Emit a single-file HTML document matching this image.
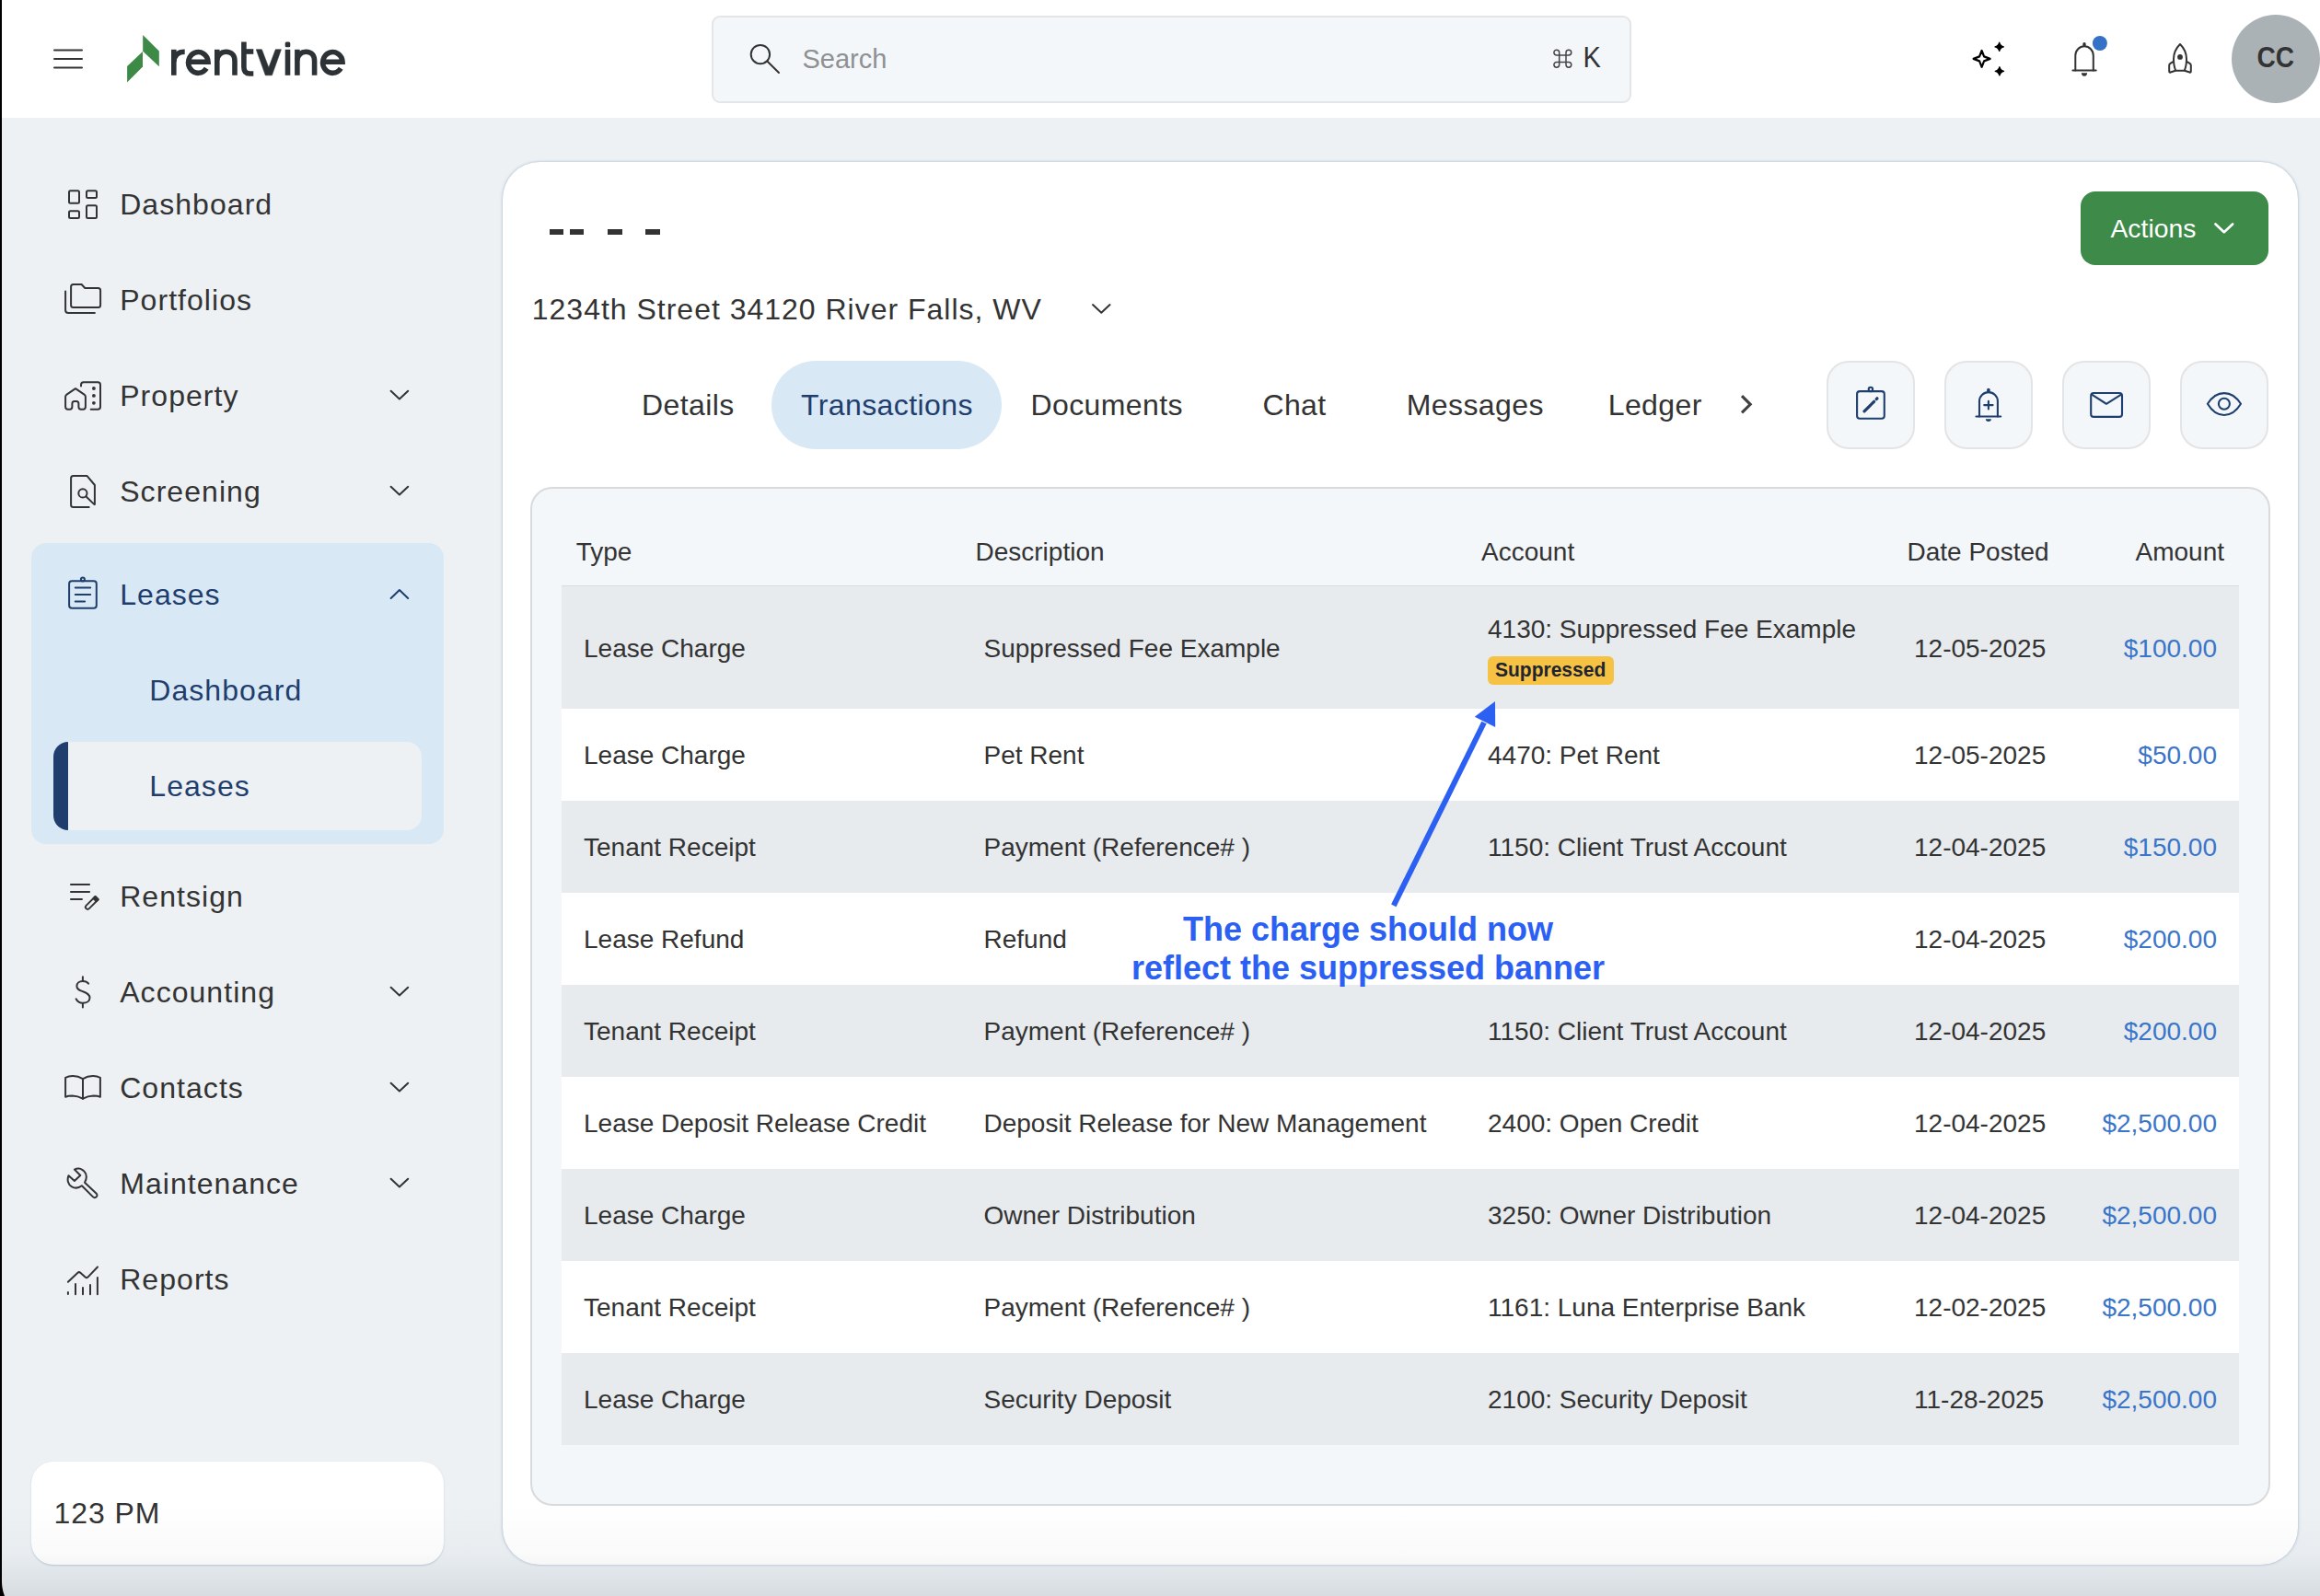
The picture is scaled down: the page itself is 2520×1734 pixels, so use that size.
<!DOCTYPE html>
<html><head><meta charset="utf-8">
<style>
*{box-sizing:border-box;margin:0;padding:0}
html,body{width:2520px;height:1734px;overflow:hidden}
body{position:relative;background:#edf1f4;font-family:"Liberation Sans",sans-serif;color:#333}
.t{position:absolute;line-height:1;white-space:nowrap}
.ab{position:absolute}
svg{position:absolute;overflow:visible}
</style></head><body>
<div class="ab" style="left:0;top:0;width:2520px;height:128px;background:#fff"></div>
<svg style="left:0;top:0" width="1" height="1"><g stroke="#333" stroke-width="2" stroke-linecap="round"><line x1="59" y1="54.5" x2="89" y2="54.5"/><line x1="59" y1="64" x2="89" y2="64"/><line x1="59" y1="73.5" x2="89" y2="73.5"/></g></svg>
<svg style="left:0;top:0" width="1" height="1"><g fill="#3d8a47"><polygon points="155.2,37.9 172.8,55.4 172.8,72.3 155.2,55.7"/><polygon points="155,55.9 155,72.5 138.1,89.6 138.1,72.1"/></g></svg>
<svg style="left:180px;top:40px" width="1" height="1"><g fill="none" stroke="#2d3236" stroke-width="5.6">
<path d="M8.8 41.8 V13.8"/>
<path d="M8.8 27 C9.5 19.5 13.5 16.2 20.7 16.2"/>
<path d="M24.6 27.2 H46 A10.7 11.4 0 1 0 44.2 34.3"/>
<path d="M55.8 41.8 V13.8"/>
<path d="M55.8 25 C57 19 60.5 16.2 65.4 16.2 C71.5 16.2 75 20 75 26 V41.8"/>
<path d="M84.9 5.6 V33 C84.9 37.8 87.2 40 91.5 40 H95.3"/>
<path d="M84.9 16 H95.3"/>

<path d="M132.5 41.8 V13.8"/>
<path d="M142.9 41.8 V13.8"/>
<path d="M142.9 25 C144 19 147.5 16.2 152.3 16.2 C158.3 16.2 161.6 20 161.6 26 V41.8"/>
<path d="M170.6 27.2 H192 A10.7 11.4 0 1 0 190.2 34.3"/>
</g><rect x="129.7" y="5.6" width="5.6" height="5.6" rx="1.5" fill="#2d3236"/><polygon points="98.3,13.8 104.4,13.8 111.85,33.5 119.3,13.8 125.4,13.8 115.4,41.8 108.3,41.8" fill="#2d3236" stroke="#2d3236" stroke-width="0.6" stroke-linejoin="round"/></svg>
<div class="ab" style="left:773px;top:16.5px;width:999px;height:95.5px;background:#f4f7fa;border:2px solid #e4e5e6;border-radius:9px"></div>
<svg style="left:0;top:0" width="1" height="1"><g fill="none" stroke="#333" stroke-width="2" stroke-linecap="round"><circle cx="825.9" cy="59.1" r="10.2"/><line x1="833.6" y1="66.8" x2="846" y2="79"/></g></svg>
<div class="t" style="left:871.5px;top:50.0px;font-size:29px;color:#8e9092;font-weight:400;letter-spacing:0px;">Search</div>
<svg style="left:0;top:0" width="1" height="1"><g fill="none" stroke="#444" stroke-width="1.5">
<path d="M1693.7 60 V57.1 A2.9 2.9 0 1 0 1690.8 60 H1703.9 A2.9 2.9 0 1 0 1701 57.1 V70.3 A2.9 2.9 0 1 0 1703.9 67.4 H1690.8 A2.9 2.9 0 1 0 1693.7 70.3 Z"/>
</g></svg>
<div class="t" style="left:1719.5px;top:48.7px;font-size:29px;color:#333;font-weight:400;letter-spacing:0px;transform:scaleY(1.06);transform-origin:0 85%">K</div>
<svg style="left:0;top:0" width="1" height="1">
<path d="M2152.6 55 L2155.1 61.4 L2161.6 63.9 L2155.1 66.4 L2152.6 72.8 L2150.1 66.4 L2143.6 63.9 L2150.1 61.4 Z" fill="none" stroke="#000" stroke-width="2.2" stroke-linejoin="round"/>
<path d="M2171.70 46.10 Q2172.60 49.90 2176.40 50.80 Q2172.60 51.70 2171.70 55.50 Q2170.80 51.70 2167.00 50.80 Q2170.80 49.90 2171.70 46.10 Z" fill="#000" stroke="#000" stroke-width="1.2" stroke-linejoin="round"/>
<path d="M2171.90 72.60 Q2172.80 76.40 2176.60 77.30 Q2172.80 78.20 2171.90 82.00 Q2171.00 78.20 2167.20 77.30 Q2171.00 76.40 2171.90 72.60 Z" fill="#000" stroke="#000" stroke-width="1.2" stroke-linejoin="round"/>
</svg>
<svg style="left:0;top:0" width="1" height="1"><g fill="none" stroke="#333" stroke-width="2" stroke-linecap="round">
<path d="M2254.3 76.4 V60.5 A9.75 10.2 0 0 1 2273.8 60.5 V76.4"/>
<line x1="2251.4" y1="76.4" x2="2276.7" y2="76.4"/>
</g>
<rect x="2262.3" y="46" width="3.4" height="4.5" rx="1.7" fill="#333"/>
<path d="M2260.9 79.3 H2267.1 A3.1 3.4 0 0 1 2260.9 79.3 Z" fill="#333"/>
<circle cx="2280.9" cy="47" r="8" fill="#3571c7"/>
</svg>
<svg style="left:0;top:0" width="1" height="1"><g fill="none" stroke="#333" stroke-width="2" stroke-linejoin="round">
<path d="M2368 48 C2363 53 2361 58 2361 64 C2361 70 2362 74 2363.3 76.7 H2372.7 C2374 74 2375 70 2375 64 C2375 58 2373 53 2368 48 Z"/>
<path d="M2360.7 66.8 L2357.5 68.8 Q2356.2 69.6 2356.2 71 V77.5 Q2356.2 79 2357.6 78.5 L2363 76.7"/>
<path d="M2375.3 66.8 L2378.5 68.8 Q2379.8 69.6 2379.8 71 V77.5 Q2379.8 79 2378.4 78.5 L2373 76.7"/>
</g><circle cx="2368" cy="61.9" r="2.9" fill="#333"/></svg>
<div class="ab" style="left:2424px;top:16px;width:96px;height:96px;border-radius:50%;background:#abb2b5"></div>
<div class="t" style="left:2451.5px;top:49.7px;font-size:28px;color:#333;font-weight:700;letter-spacing:0px;transform:scaleY(1.13);transform-origin:0 85%">CC</div>
<div class="t" style="left:130.2px;top:205.9px;font-size:32px;color:#333;font-weight:400;letter-spacing:1.05px;">Dashboard</div>
<div class="t" style="left:130.2px;top:309.9px;font-size:32px;color:#333;font-weight:400;letter-spacing:1.05px;">Portfolios</div>
<div class="t" style="left:130.2px;top:413.9px;font-size:32px;color:#333;font-weight:400;letter-spacing:1.05px;">Property</div>
<div class="t" style="left:130.2px;top:517.9px;font-size:32px;color:#333;font-weight:400;letter-spacing:1.05px;">Screening</div>
<div class="ab" style="left:34px;top:590px;width:448px;height:327px;background:#d9e8f5;border-radius:16px"></div>
<div class="t" style="left:130.2px;top:629.9px;font-size:32px;color:#1f3e6d;font-weight:400;letter-spacing:1.05px;">Leases</div>
<div class="t" style="left:162.3px;top:733.9px;font-size:32px;color:#1f3e6d;font-weight:400;letter-spacing:1.05px;">Dashboard</div>
<div class="ab" style="left:58px;top:806px;width:400px;height:96px;background:#edf1f4;border-radius:16px;overflow:hidden"><div class="ab" style="left:0;top:0;width:16px;height:96px;background:#1f3e6d"></div></div>
<div class="t" style="left:162.3px;top:837.9px;font-size:32px;color:#1f3e6d;font-weight:400;letter-spacing:1.05px;">Leases</div>
<div class="t" style="left:130.2px;top:957.9px;font-size:32px;color:#333;font-weight:400;letter-spacing:1.05px;">Rentsign</div>
<div class="t" style="left:130.2px;top:1061.9px;font-size:32px;color:#333;font-weight:400;letter-spacing:1.05px;">Accounting</div>
<div class="t" style="left:130.2px;top:1165.9px;font-size:32px;color:#333;font-weight:400;letter-spacing:1.05px;">Contacts</div>
<div class="t" style="left:130.2px;top:1269.9px;font-size:32px;color:#333;font-weight:400;letter-spacing:1.05px;">Maintenance</div>
<div class="t" style="left:130.2px;top:1373.9px;font-size:32px;color:#333;font-weight:400;letter-spacing:1.05px;">Reports</div>
<svg style="left:0;top:0" width="1" height="1"><path d="M424.59999999999997 424.8 L433.9 433.5 L443.2 424.8" fill="none" stroke="#333" stroke-width="2" stroke-linecap="round" stroke-linejoin="round"/></svg>
<svg style="left:0;top:0" width="1" height="1"><path d="M424.59999999999997 528.8 L433.9 537.5 L443.2 528.8" fill="none" stroke="#333" stroke-width="2" stroke-linecap="round" stroke-linejoin="round"/></svg>
<svg style="left:0;top:0" width="1" height="1"><path d="M424.59999999999997 1072.8 L433.9 1081.5 L443.2 1072.8" fill="none" stroke="#333" stroke-width="2" stroke-linecap="round" stroke-linejoin="round"/></svg>
<svg style="left:0;top:0" width="1" height="1"><path d="M424.59999999999997 1176.8 L433.9 1185.5 L443.2 1176.8" fill="none" stroke="#333" stroke-width="2" stroke-linecap="round" stroke-linejoin="round"/></svg>
<svg style="left:0;top:0" width="1" height="1"><path d="M424.59999999999997 1280.8 L433.9 1289.5 L443.2 1280.8" fill="none" stroke="#333" stroke-width="2" stroke-linecap="round" stroke-linejoin="round"/></svg>
<svg style="left:0;top:0" width="1" height="1"><path d="M424.6 650 L433.9 641 L443.2 650" fill="none" stroke="#1f3e6d" stroke-width="2" stroke-linecap="round" stroke-linejoin="round"/></svg>
<svg style="left:0;top:0" width="1" height="1"><g fill="none" stroke="#333" stroke-width="2" stroke-linecap="round" stroke-linejoin="round">
<rect x="75" y="207.2" width="11" height="13.6" rx="1.5"/><rect x="94" y="207.2" width="11" height="7.8" rx="1.5"/>
<rect x="75" y="229.2" width="11" height="7.8" rx="1.5"/><rect x="94" y="223.2" width="11" height="13.8" rx="1.5"/>
</g></svg>
<svg style="left:0;top:0" width="1" height="1"><g fill="none" stroke="#333" stroke-width="2" stroke-linecap="round" stroke-linejoin="round">
<path d="M77.1 311.5 Q77.1 309 79.6 309 H88.6 L92.3 313 H106.6 Q109.1 313 109.1 315.5 V331.4 Q109.1 333.9 106.6 333.9 H79.6 Q77.1 333.9 77.1 331.4 Z"/>
<path d="M71.1 316.4 V337.1 Q71.1 340.1 74.1 340.1 H102.9"/>
</g></svg>
<svg style="left:0;top:0" width="1" height="1"><g fill="none" stroke="#333" stroke-width="2" stroke-linecap="round" stroke-linejoin="round">
<path d="M71.1 431 Q71.1 429.5 72.5 428.6 L82 422.2 L91.5 428.6 Q92.9 429.5 92.9 431 V442 Q92.9 444.7 90.2 444.7 H88 Q85.4 444.7 85.4 442 V438.5 Q85.4 436 83 436 H80.8 Q78.4 436 78.4 438.5 V442 Q78.4 444.7 75.8 444.7 H73.8 Q71.1 444.7 71.1 442 Z"/>
<path d="M88 419.5 V418 Q88 415.2 90.8 415.2 H106.2 Q109 415.2 109 418 V441.9 Q109 444.7 106.2 444.7 H98.7"/>
</g><g fill="#333"><circle cx="101.9" cy="422" r="1.9"/><circle cx="101.9" cy="429.9" r="1.9"/><circle cx="101.9" cy="437.8" r="1.9"/></g></svg>
<svg style="left:0;top:0" width="1" height="1"><g fill="none" stroke="#333" stroke-width="2" stroke-linecap="round" stroke-linejoin="round">
<path d="M96.7 550.9 H79.6 Q77.1 550.9 77.1 548.4 V519.6 Q77.1 517.1 79.6 517.1 H94.6 L102.9 527 V547.7"/>
<circle cx="89.9" cy="535.9" r="4.6"/><path d="M93.3 539.3 L102.5 548.1"/>
</g></svg>
<svg style="left:0;top:0" width="1" height="1"><g fill="none" stroke="#1f3e6d" stroke-width="2" stroke-linecap="round" stroke-linejoin="round">
<rect x="75.1" y="631.3" width="29.7" height="29.5" rx="3"/>
<circle cx="89.9" cy="629.4" r="2"/>
<path d="M81.8 638.4 H98.2 M81.8 645.9 H98.2 M81.8 653.4 H92.1"/>
</g></svg>
<svg style="left:0;top:0" width="1" height="1"><g fill="none" stroke="#333" stroke-width="2">
<path d="M76.2 961 H97.8 M76.2 968.9 H97.8 M76.2 977 H89.7"/>
<path d="M106.73 977.23 L96.83 987.13 A2.3 2.3 0 0 1 93.57 983.87 L103.47 973.97 Z" stroke-linejoin="round" stroke-width="1.9"/>
<path d="M106.73 977.23 L104.61 979.35 L101.35 976.09 L103.47 973.97 Z" fill="#333" stroke-width="1.9" stroke-linejoin="round"/>
</g></svg>
<svg style="left:0;top:0" width="1" height="1"><g fill="none" stroke="#333" stroke-width="2" stroke-linecap="round" stroke-linejoin="round">
<path d="M89.9 1061.3 V1065.5 M89.9 1090 V1094.5"/>
<path d="M96.1 1068.6 C94.5 1066.5 92.3 1066.1 89.9 1066.1 C86 1066.1 83.4 1068.3 83.4 1071.4 C83.4 1075 86.5 1076 90 1077.2 C94 1078.6 97.5 1080 97.5 1083.9 C97.5 1087.6 94.3 1089.8 89.9 1089.8 C86.5 1089.8 84 1088 82.6 1085.3"/>
</g></svg>
<svg style="left:0;top:0" width="1" height="1"><g fill="none" stroke="#333" stroke-width="2" stroke-linecap="round" stroke-linejoin="round">
<path d="M90 1172.1 C86.5 1170 83 1169 78.8 1169.1 C75.6 1169.2 73 1169.9 71.1 1170.8 V1191.8 C73 1190.9 75.5 1190.6 78.5 1190.6 C82.5 1190.7 86.5 1191.8 90 1193.7 Z"/>
<path d="M90 1172.1 C93.5 1170 97 1169 101.2 1169.1 C104.4 1169.2 107 1169.9 108.9 1170.8 V1191.8 C107 1190.9 104.5 1190.6 101.5 1190.6 C97.5 1190.7 93.5 1191.8 90 1193.7 Z"/>
</g></svg>
<svg style="left:0;top:0" width="1" height="1"><g fill="none" stroke="#333" stroke-width="2" stroke-linecap="round" stroke-linejoin="round">
<path d="M80.9 1270.6 L87.3 1277 L80.9 1283 L74.5 1277.2 C72.5 1282 74 1287 78 1289.3 C81.5 1291.3 85.5 1290.8 88.9 1288.3 L101 1300.4 C102 1301.4 103.7 1301.4 104.7 1300.4 C105.7 1299.4 105.7 1297.7 104.7 1296.7 L92 1284.7 C94.5 1281 94.5 1276 91.5 1272.7 C88.5 1269.5 84.5 1268.8 80.9 1270.6 Z"/>
</g></svg>
<svg style="left:0;top:0" width="1" height="1"><g fill="none" stroke="#333" stroke-width="2" stroke-linecap="round" stroke-linejoin="round">
<path d="M73.9 1392.7 L84.5 1382.8 Q85.9 1381.5 87.3 1382.8 L92.6 1387.6 Q94 1388.8 95.4 1387.6 L106 1376.5"/>
<path d="M73.9 1404 V1406 M82 1395 V1406.2 M90 1399.1 V1406.2 M98 1395.9 V1406.2 M105.9 1388 V1406.2"/>
</g></svg>
<div class="ab" style="left:34px;top:1588px;width:448px;height:112px;background:#fff;border-radius:24px;box-shadow:0 1px 2px rgba(70,100,140,.28)"></div>
<div class="t" style="left:58.5px;top:1627.9px;font-size:32px;color:#333;font-weight:400;letter-spacing:0.95px;">123 PM</div>
<div class="ab" style="left:546px;top:176px;width:1950px;height:1524px;background:#fff;border-radius:40px;box-shadow:-1px 0 3px rgba(100,130,170,.26),1px 0 3px rgba(100,130,170,.26),0 0 1px rgba(100,130,170,.22)"></div>
<div class="ab" style="left:597px;top:249.2px;width:15px;height:5.6px;background:#333"></div><div class="ab" style="left:619.4px;top:249.2px;width:15px;height:5.6px;background:#333"></div><div class="ab" style="left:660.3px;top:249.2px;width:15.3px;height:5.6px;background:#333"></div><div class="ab" style="left:701.3px;top:249.2px;width:15.3px;height:5.6px;background:#333"></div>
<div class="ab" style="left:2260px;top:208px;width:204px;height:80px;background:#3e8a48;border-radius:16px"></div>
<div class="t" style="left:2292.5px;top:234.3px;font-size:28.3px;color:#fff;font-weight:400;letter-spacing:0px;">Actions</div>
<svg style="left:0;top:0" width="1" height="1"><path d="M2406.5 243.5 L2415.8 252.2 L2425.1000000000004 243.5" fill="none" stroke="#fff" stroke-width="2.7" stroke-linecap="round" stroke-linejoin="round"/></svg>
<div class="t" style="left:577.8px;top:319.9px;font-size:32px;color:#333;font-weight:400;letter-spacing:0.99px;">1234th Street 34120 River Falls, WV</div>
<svg style="left:0;top:0" width="1" height="1"><path d="M1187.0 331.1 L1196.3 339.8 L1205.6 331.1" fill="none" stroke="#333" stroke-width="2" stroke-linecap="round" stroke-linejoin="round"/></svg>
<div class="ab" style="left:838px;top:392px;width:250px;height:96px;background:#d9e8f5;border-radius:48px"></div>
<div class="t" style="left:697.0px;top:424.3px;font-size:32px;color:#333;font-weight:400;letter-spacing:0.4px;">Details</div>
<div class="t" style="left:870.0px;top:424.3px;font-size:32px;color:#1f3e6d;font-weight:400;letter-spacing:0.4px;">Transactions</div>
<div class="t" style="left:1119.5px;top:424.3px;font-size:32px;color:#333;font-weight:400;letter-spacing:0.4px;">Documents</div>
<div class="t" style="left:1371.4px;top:424.3px;font-size:32px;color:#333;font-weight:400;letter-spacing:0.4px;">Chat</div>
<div class="t" style="left:1527.8px;top:424.3px;font-size:32px;color:#333;font-weight:400;letter-spacing:0.4px;">Messages</div>
<div class="t" style="left:1746.7px;top:424.3px;font-size:32px;color:#333;font-weight:400;letter-spacing:0.4px;">Ledger</div>
<svg style="left:0;top:0" width="1" height="1"><path d="M1892 430.2 L1901.2 439.3 L1892 448.4" fill="none" stroke="#404040" stroke-width="3.1" stroke-linecap="butt" stroke-linejoin="miter"/></svg>
<div class="ab" style="left:1984px;top:392px;width:96px;height:96px;background:#f3f7fa;border:2px solid #e2e4e6;border-radius:24px"></div>
<div class="ab" style="left:2112px;top:392px;width:96px;height:96px;background:#f3f7fa;border:2px solid #e2e4e6;border-radius:24px"></div>
<div class="ab" style="left:2240px;top:392px;width:96px;height:96px;background:#f3f7fa;border:2px solid #e2e4e6;border-radius:24px"></div>
<div class="ab" style="left:2368px;top:392px;width:96px;height:96px;background:#f3f7fa;border:2px solid #e2e4e6;border-radius:24px"></div>
<svg style="left:0;top:0" width="1" height="1"><g fill="none" stroke="#1f3e6d" stroke-width="2.1" stroke-linecap="round" stroke-linejoin="round">
<rect x="2017.1" y="425.1" width="29.7" height="29.7" rx="3"/>
<circle cx="2031.9" cy="423" r="2.2"/>
<path d="M2025 446.8 L2035.6 436.3" stroke-width="3.2"/>
<path d="M2038.2 433.6 L2039 432.8" stroke-width="3.2"/>
</g></svg>
<svg style="left:0;top:0" width="1" height="1"><g fill="none" stroke="#1f3e6d" stroke-width="2.1" stroke-linecap="round" stroke-linejoin="round">
<path d="M2150 452.5 V435.8 A9.95 9.7 0 0 1 2169.9 435.8 V452.5"/>
<line x1="2146.5" y1="452.5" x2="2173.2" y2="452.5"/>
<path d="M2155.2 440.1 H2164.6 M2159.9 435.7 V444.5"/>
</g>
<rect x="2158.1" y="421.8" width="3.6" height="4.6" rx="1.8" fill="#1f3e6d"/>
<path d="M2156.9 455.2 H2162.9 A3 2.7 0 0 1 2156.9 455.2 Z" fill="#1f3e6d"/>
</svg>
<svg style="left:0;top:0" width="1" height="1"><g fill="none" stroke="#1f3e6d" stroke-width="2.1" stroke-linecap="round" stroke-linejoin="round">
<rect x="2271.2" y="427" width="33.8" height="25.9" rx="3"/>
<path d="M2272.5 428.8 L2287.9 438.8 L2303.7 428.8"/>
</g></svg>
<svg style="left:0;top:0" width="1" height="1"><g fill="none" stroke="#1f3e6d" stroke-width="2.1" stroke-linecap="round" stroke-linejoin="round">
<path d="M2397.9 438.8 C2403 430.5 2409 427.1 2415.9 427.1 C2422.8 427.1 2428.8 430.5 2434 438.8 C2428.8 447.3 2422.8 451 2415.9 451 C2409 451 2403 447.3 2397.9 438.8 Z"/>
<circle cx="2415.9" cy="438.8" r="6"/>
</g></svg>
<div class="ab" style="left:576px;top:529px;width:1890px;height:1107px;background:#f3f7fa;border:2px solid #d9dadb;border-radius:24px"></div>
<div class="t" style="left:625.7px;top:585.8px;font-size:28px;color:#333;font-weight:400;letter-spacing:0px;">Type</div>
<div class="t" style="left:1059.5px;top:585.8px;font-size:28px;color:#333;font-weight:400;letter-spacing:0px;">Description</div>
<div class="t" style="left:1609.0px;top:585.8px;font-size:28px;color:#333;font-weight:400;letter-spacing:0px;">Account</div>
<div class="t" style="left:2071.5px;top:585.8px;font-size:28px;color:#333;font-weight:400;letter-spacing:0px;">Date Posted</div>
<div class="t" style="right:104.0px;top:585.8px;font-size:28px;color:#333;font-weight:400;letter-spacing:0px;">Amount</div>
<div class="ab" style="left:610px;top:635.5px;width:1822px;height:2px;background:#d9dcdf"></div>
<div class="ab" style="left:610px;top:637px;width:1822px;height:133px;background:#e7ebee"></div>
<div class="t" style="left:634.0px;top:690.8px;font-size:28px;color:#333;font-weight:400;letter-spacing:0px;">Lease Charge</div>
<div class="t" style="left:1068.5px;top:690.8px;font-size:28px;color:#333;font-weight:400;letter-spacing:0px;">Suppressed Fee Example</div>
<div class="t" style="left:1616.0px;top:670.3px;font-size:28px;color:#333;font-weight:400;letter-spacing:0px;">4130: Suppressed Fee Example</div>
<div class="t" style="left:2079.0px;top:690.8px;font-size:28px;color:#333;font-weight:400;letter-spacing:0px;">12-05-2025</div>
<div class="t" style="right:112.0px;top:690.8px;font-size:28px;color:#3a75c9;font-weight:400;letter-spacing:0px;">$100.00</div>
<div class="ab" style="left:610px;top:770px;width:1822px;height:100px;background:#fff"></div>
<div class="t" style="left:634.0px;top:807.3px;font-size:28px;color:#333;font-weight:400;letter-spacing:0px;">Lease Charge</div>
<div class="t" style="left:1068.5px;top:807.3px;font-size:28px;color:#333;font-weight:400;letter-spacing:0px;">Pet Rent</div>
<div class="t" style="left:1616.0px;top:807.3px;font-size:28px;color:#333;font-weight:400;letter-spacing:0px;">4470: Pet Rent</div>
<div class="t" style="left:2079.0px;top:807.3px;font-size:28px;color:#333;font-weight:400;letter-spacing:0px;">12-05-2025</div>
<div class="t" style="right:112.0px;top:807.3px;font-size:28px;color:#3a75c9;font-weight:400;letter-spacing:0px;">$50.00</div>
<div class="ab" style="left:610px;top:870px;width:1822px;height:100px;background:#e7ebee"></div>
<div class="t" style="left:634.0px;top:907.3px;font-size:28px;color:#333;font-weight:400;letter-spacing:0px;">Tenant Receipt</div>
<div class="t" style="left:1068.5px;top:907.3px;font-size:28px;color:#333;font-weight:400;letter-spacing:0px;">Payment (Reference# )</div>
<div class="t" style="left:1616.0px;top:907.3px;font-size:28px;color:#333;font-weight:400;letter-spacing:0px;">1150: Client Trust Account</div>
<div class="t" style="left:2079.0px;top:907.3px;font-size:28px;color:#333;font-weight:400;letter-spacing:0px;">12-04-2025</div>
<div class="t" style="right:112.0px;top:907.3px;font-size:28px;color:#3a75c9;font-weight:400;letter-spacing:0px;">$150.00</div>
<div class="ab" style="left:610px;top:970px;width:1822px;height:100px;background:#fff"></div>
<div class="t" style="left:634.0px;top:1007.3px;font-size:28px;color:#333;font-weight:400;letter-spacing:0px;">Lease Refund</div>
<div class="t" style="left:1068.5px;top:1007.3px;font-size:28px;color:#333;font-weight:400;letter-spacing:0px;">Refund</div>
<div class="t" style="left:2079.0px;top:1007.3px;font-size:28px;color:#333;font-weight:400;letter-spacing:0px;">12-04-2025</div>
<div class="t" style="right:112.0px;top:1007.3px;font-size:28px;color:#3a75c9;font-weight:400;letter-spacing:0px;">$200.00</div>
<div class="ab" style="left:610px;top:1070px;width:1822px;height:100px;background:#e7ebee"></div>
<div class="t" style="left:634.0px;top:1107.3px;font-size:28px;color:#333;font-weight:400;letter-spacing:0px;">Tenant Receipt</div>
<div class="t" style="left:1068.5px;top:1107.3px;font-size:28px;color:#333;font-weight:400;letter-spacing:0px;">Payment (Reference# )</div>
<div class="t" style="left:1616.0px;top:1107.3px;font-size:28px;color:#333;font-weight:400;letter-spacing:0px;">1150: Client Trust Account</div>
<div class="t" style="left:2079.0px;top:1107.3px;font-size:28px;color:#333;font-weight:400;letter-spacing:0px;">12-04-2025</div>
<div class="t" style="right:112.0px;top:1107.3px;font-size:28px;color:#3a75c9;font-weight:400;letter-spacing:0px;">$200.00</div>
<div class="ab" style="left:610px;top:1170px;width:1822px;height:100px;background:#fff"></div>
<div class="t" style="left:634.0px;top:1207.3px;font-size:28px;color:#333;font-weight:400;letter-spacing:0px;">Lease Deposit Release Credit</div>
<div class="t" style="left:1068.5px;top:1207.3px;font-size:28px;color:#333;font-weight:400;letter-spacing:0px;">Deposit Release for New Management</div>
<div class="t" style="left:1616.0px;top:1207.3px;font-size:28px;color:#333;font-weight:400;letter-spacing:0px;">2400: Open Credit</div>
<div class="t" style="left:2079.0px;top:1207.3px;font-size:28px;color:#333;font-weight:400;letter-spacing:0px;">12-04-2025</div>
<div class="t" style="right:112.0px;top:1207.3px;font-size:28px;color:#3a75c9;font-weight:400;letter-spacing:0px;">$2,500.00</div>
<div class="ab" style="left:610px;top:1270px;width:1822px;height:100px;background:#e7ebee"></div>
<div class="t" style="left:634.0px;top:1307.3px;font-size:28px;color:#333;font-weight:400;letter-spacing:0px;">Lease Charge</div>
<div class="t" style="left:1068.5px;top:1307.3px;font-size:28px;color:#333;font-weight:400;letter-spacing:0px;">Owner Distribution</div>
<div class="t" style="left:1616.0px;top:1307.3px;font-size:28px;color:#333;font-weight:400;letter-spacing:0px;">3250: Owner Distribution</div>
<div class="t" style="left:2079.0px;top:1307.3px;font-size:28px;color:#333;font-weight:400;letter-spacing:0px;">12-04-2025</div>
<div class="t" style="right:112.0px;top:1307.3px;font-size:28px;color:#3a75c9;font-weight:400;letter-spacing:0px;">$2,500.00</div>
<div class="ab" style="left:610px;top:1370px;width:1822px;height:100px;background:#fff"></div>
<div class="t" style="left:634.0px;top:1407.3px;font-size:28px;color:#333;font-weight:400;letter-spacing:0px;">Tenant Receipt</div>
<div class="t" style="left:1068.5px;top:1407.3px;font-size:28px;color:#333;font-weight:400;letter-spacing:0px;">Payment (Reference# )</div>
<div class="t" style="left:1616.0px;top:1407.3px;font-size:28px;color:#333;font-weight:400;letter-spacing:0px;">1161: Luna Enterprise Bank</div>
<div class="t" style="left:2079.0px;top:1407.3px;font-size:28px;color:#333;font-weight:400;letter-spacing:0px;">12-02-2025</div>
<div class="t" style="right:112.0px;top:1407.3px;font-size:28px;color:#3a75c9;font-weight:400;letter-spacing:0px;">$2,500.00</div>
<div class="ab" style="left:610px;top:1470px;width:1822px;height:100px;background:#e7ebee"></div>
<div class="t" style="left:634.0px;top:1507.3px;font-size:28px;color:#333;font-weight:400;letter-spacing:0px;">Lease Charge</div>
<div class="t" style="left:1068.5px;top:1507.3px;font-size:28px;color:#333;font-weight:400;letter-spacing:0px;">Security Deposit</div>
<div class="t" style="left:1616.0px;top:1507.3px;font-size:28px;color:#333;font-weight:400;letter-spacing:0px;">2100: Security Deposit</div>
<div class="t" style="left:2079.0px;top:1507.3px;font-size:28px;color:#333;font-weight:400;letter-spacing:0px;">11-28-2025</div>
<div class="t" style="right:112.0px;top:1507.3px;font-size:28px;color:#3a75c9;font-weight:400;letter-spacing:0px;">$2,500.00</div>
<div class="ab" style="left:1616px;top:713px;width:137px;height:31px;background:#f5c243;border-radius:6px"></div>
<div class="t" style="left:1624.0px;top:717.4px;font-size:21px;color:#1e2431;font-weight:700;letter-spacing:0px;transform:scaleY(1.07);transform-origin:0 85%">Suppressed</div>
<svg style="left:0;top:0" width="1" height="1">
<line x1="1513.8" y1="983.8" x2="1612" y2="785" stroke="#2b60f3" stroke-width="6"/>
<polygon points="1624,762 1601.8,778.8 1624.2,790" fill="#2b60f3"/>
</svg>
<div class="t" style="left:1186px;top:988.5px;width:600px;text-align:center;font-size:36px;font-weight:700;color:#2b60f3;line-height:42.5px;white-space:normal">The charge should now<br>reflect the suppressed banner</div>
<div class="ab" style="left:0;top:0;width:2px;height:1734px;background:#000"></div>
<div class="ab" style="left:0;top:1634px;width:2520px;height:100px;background:linear-gradient(rgba(20,40,60,0) 0%,rgba(20,40,60,.025) 55%,rgba(20,40,60,.1) 100%)"></div>
<div class="ab" style="left:0;top:1718px;width:46px;height:16px;background:radial-gradient(circle 44px at 46px 0px,rgba(0,0,0,0) 43.5px,#000 44.5px)"></div>
</body></html>
